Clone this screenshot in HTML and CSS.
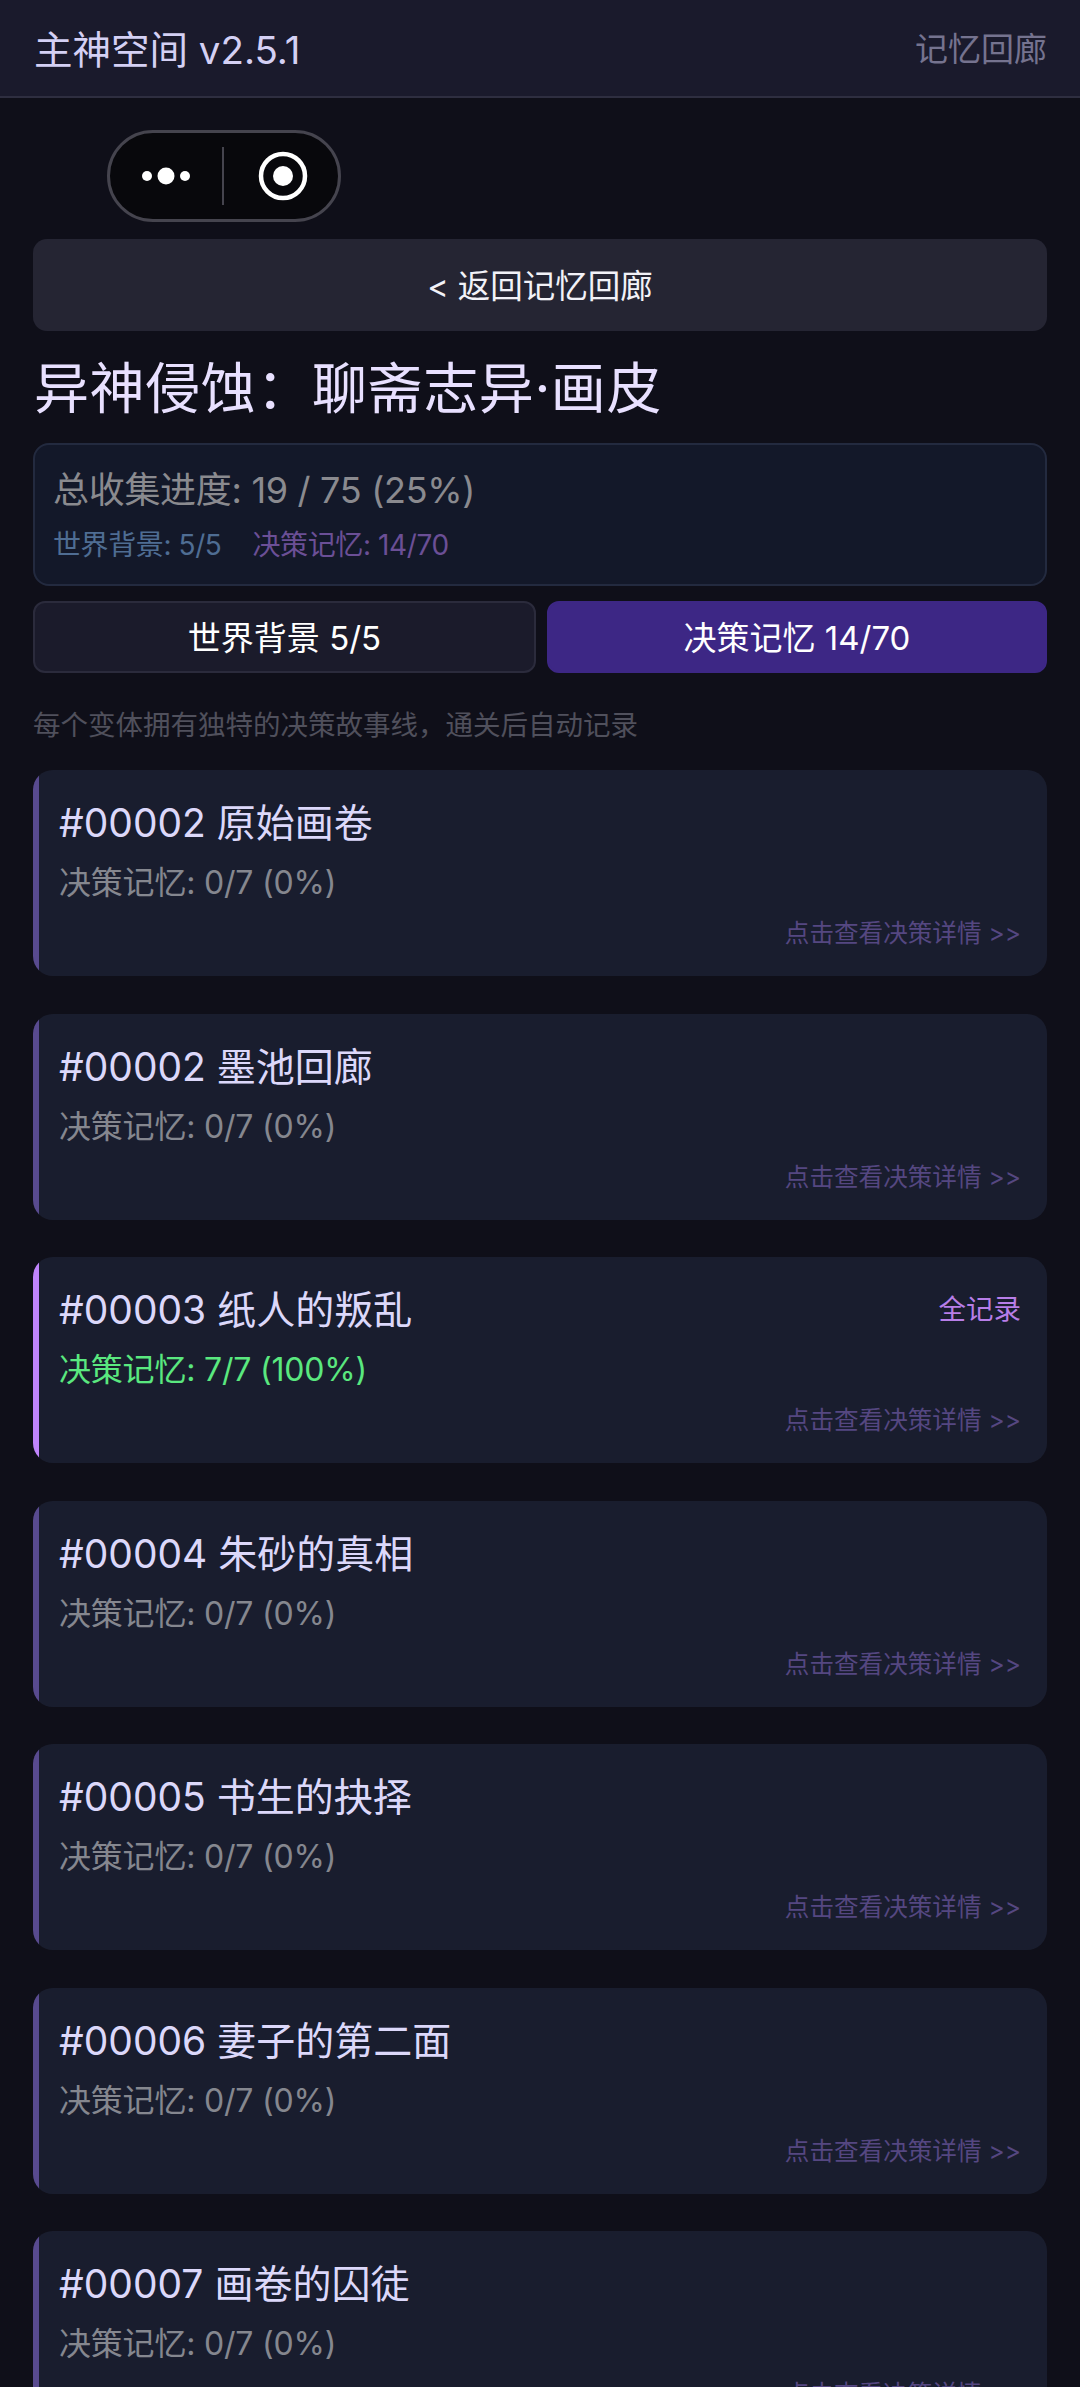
FILE: index.html
```html
<!DOCTYPE html>
<html lang="zh">
<head>
<meta charset="utf-8">
<title>主神空间</title>
<link rel="stylesheet" href="styles.css">
</head>
<body>
<header class="topbar">
  <div class="brand">主神空间 v2.5.1</div>
  <div class="nav">记忆回廊</div>
</header>
<main class="page">
  <div class="capsule">
    <svg class="dots" width="50" height="20" viewBox="0 0 50 20"><circle cx="6" cy="10" r="5" fill="#fff"/><circle cx="25" cy="10" r="8.500" fill="#fff"/><circle cx="44" cy="10" r="5" fill="#fff"/></svg>
    <span class="sep"></span>
    <svg class="target" width="50" height="50" viewBox="0 0 50 50"><circle cx="25" cy="25" r="22" fill="none" stroke="#fff" stroke-width="4.500"/><circle cx="25" cy="25" r="10" fill="#fff"/></svg>
  </div>
  <button class="back">&lt; 返回记忆回廊</button>
  <h1 class="title">异神侵蚀：聊斋志异·画皮</h1>
  <section class="summary">
    <div class="total">总收集进度: 19 / 75 (25%)</div>
    <div class="subs"><span class="sub-world">世界背景: 5/5</span><span class="sub-decision">决策记忆: 14/70</span></div>
  </section>
  <div class="tabs">
    <div class="tab">世界背景 5/5</div>
    <div class="tab tab-active">决策记忆 14/70</div>
  </div>
  <p class="note">每个变体拥有独特的决策故事线，通关后自动记录</p>
  <div class="cards">
    <article class="card">
      <div class="card-head"><span class="card-name">#00002 原始画卷</span></div>
      <div class="card-meta">决策记忆: 0/7 (0%)</div>
      <div class="card-link">点击查看决策详情 &gt;&gt;</div>
    </article>
    <article class="card">
      <div class="card-head"><span class="card-name">#00002 墨池回廊</span></div>
      <div class="card-meta">决策记忆: 0/7 (0%)</div>
      <div class="card-link">点击查看决策详情 &gt;&gt;</div>
    </article>
    <article class="card card-done">
      <div class="card-head"><span class="card-name">#00003 纸人的叛乱</span><span class="card-tag">全记录</span></div>
      <div class="card-meta">决策记忆: 7/7 (100%)</div>
      <div class="card-link">点击查看决策详情 &gt;&gt;</div>
    </article>
    <article class="card">
      <div class="card-head"><span class="card-name">#00004 朱砂的真相</span></div>
      <div class="card-meta">决策记忆: 0/7 (0%)</div>
      <div class="card-link">点击查看决策详情 &gt;&gt;</div>
    </article>
    <article class="card">
      <div class="card-head"><span class="card-name">#00005 书生的抉择</span></div>
      <div class="card-meta">决策记忆: 0/7 (0%)</div>
      <div class="card-link">点击查看决策详情 &gt;&gt;</div>
    </article>
    <article class="card">
      <div class="card-head"><span class="card-name">#00006 妻子的第二面</span></div>
      <div class="card-meta">决策记忆: 0/7 (0%)</div>
      <div class="card-link">点击查看决策详情 &gt;&gt;</div>
    </article>
    <article class="card">
      <div class="card-head"><span class="card-name">#00007 画卷的囚徒</span></div>
      <div class="card-meta">决策记忆: 0/7 (0%)</div>
      <div class="card-link">点击查看决策详情 &gt;&gt;</div>
    </article>
  </div>
</main>
</body>
</html>
```
FILE: styles.css
```css
* { box-sizing: border-box; }
html, body { margin: 0; padding: 0; }
body {
  height: 2387px;
  overflow: hidden;
  background: #0f0f19;
  font-family: Inter, "Noto Sans CJK SC", sans-serif;
  color: #e0e0ff;
}
.topbar {
  height: 98px;
  padding: 0 33px 2px 34px;
  display: flex;
  align-items: center;
  justify-content: space-between;
  background: #1a1a2c;
  border-bottom: 2px solid #2e2e40;
}
.brand { font-size: 38.500px; color: #d4d0f4; }
.nav { font-size: 33px; color: #75738f; }
.page { padding: 32px 33px 0; }
.capsule {
  width: 234px;
  height: 92px;
  margin-left: 74px;
  padding: 0 30px 0 31px;
  display: flex;
  align-items: center;
  justify-content: space-between;
  background: #08080c;
  border: 3px solid #45444e;
  border-radius: 46px;
}
.sep { width: 2px; height: 58px; background: #45444e; }
.target { margin-left: 3px; }
.back {
  display: block;
  width: 100%;
  height: 92px;
  margin-top: 17px;
  padding: 0 0 3px;
  border: 0;
  border-radius: 14px;
  background: #252533;
  color: #f2f2f8;
  font: inherit;
  font-size: 32.500px;
}
.title {
  margin: 22px 0 0 1px;
  height: 90px;
  line-height: 70px;
  font-size: 55px;
  letter-spacing: 0.6px;
  font-weight: 400;
  color: #e8e0ff;
}
.summary {
  height: 143px;
  padding: 19px 20px 0 18px;
  background: #131829;
  border: 2px solid #232a3f;
  border-radius: 16px;
}
.total { font-size: 36px; line-height: 52px; letter-spacing: -0.3px; color: #8a8a8f; }
.subs { display: flex; gap: 31px; margin-top: 9px; font-size: 28px; line-height: 40px; letter-spacing: -0.4px; }
.sub-world { color: #4f6d93; }
.sub-decision { color: #6b4f96; }
.tabs { display: grid; grid-template-columns: 503px 1fr; gap: 11px; margin-top: 15px; }
.tab {
  height: 72px;
  padding-bottom: 2px;
  display: flex;
  align-items: center;
  justify-content: center;
  font-size: 33px;
  color: #fff;
  background: #1b1b2b;
  border: 2px solid #2b2b3c;
  border-radius: 12px;
}
.tab-active { background: #3d2785; border-color: #3d2785; }
.note {
  margin: 32px 0 0;
  height: 40px;
  line-height: 40px;
  font-size: 27.500px;
  color: #50505c;
}
.cards { margin-top: 25px; display: flex; flex-direction: column; gap: 37.500px; }
.card {
  height: 206px;
  padding: 22px 26px 0 26px;
  background: linear-gradient(to right, #584a8f 6px, #191d2e 6px);
  border-radius: 20px;
  flex: none;
}
.card-done { background: linear-gradient(to right, #c084fc 6px, #191d2e 6px); }
.card-head { display: flex; justify-content: space-between; align-items: center; height: 56px; }
.card-name { font-size: 39px; color: #dcd8fa; }
.card-tag { font-size: 27.500px; color: #b77ee8; }
.card-meta { margin-top: 11px; font-size: 32px; line-height: 48px; letter-spacing: -0.2px; color: #85878f; }
.card-done .card-meta { color: #5ae87f; }
.card-link { margin-top: 8px; text-align: right; font-size: 24.600px; line-height: 36px; color: #554781; }
```
